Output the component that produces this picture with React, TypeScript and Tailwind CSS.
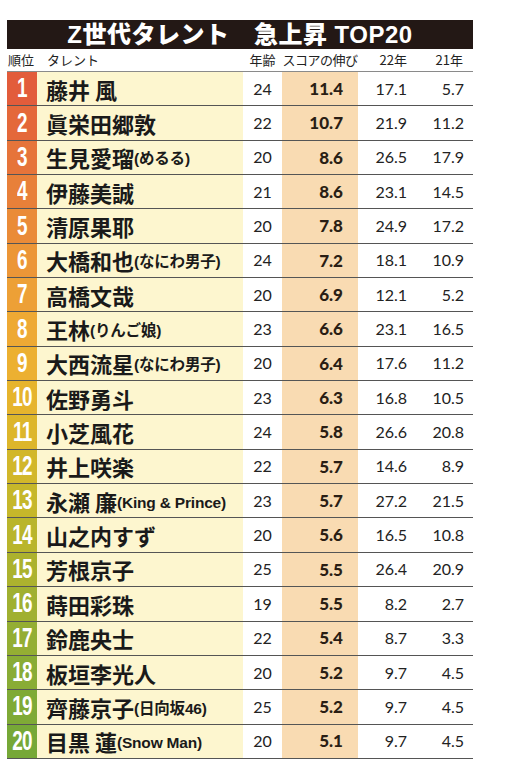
import React from "react";

const rows = [
  { rank: 1, name: "藤井 風", sub: "", age: 24, score: "11.4", y22: "17.1", y21: "5.7", color: "bg-[#e25c3b]" },
  { rank: 2, name: "眞栄田郷敦", sub: "", age: 22, score: "10.7", y22: "21.9", y21: "11.2", color: "bg-[#e4683a]" },
  { rank: 3, name: "生見愛瑠", sub: "(めるる)", age: 20, score: "8.6", y22: "26.5", y21: "17.9", color: "bg-[#e6743a]" },
  { rank: 4, name: "伊藤美誠", sub: "", age: 21, score: "8.6", y22: "23.1", y21: "14.5", color: "bg-[#e88039]" },
  { rank: 5, name: "清原果耶", sub: "", age: 20, score: "7.8", y22: "24.9", y21: "17.2", color: "bg-[#ea8b38]" },
  { rank: 6, name: "大橋和也", sub: "(なにわ男子)", age: 24, score: "7.2", y22: "18.1", y21: "10.9", color: "bg-[#ec9637]" },
  { rank: 7, name: "高橋文哉", sub: "", age: 20, score: "6.9", y22: "12.1", y21: "5.2", color: "bg-[#eda036]" },
  { rank: 8, name: "王林", sub: "(りんご娘)", age: 23, score: "6.6", y22: "23.1", y21: "16.5", color: "bg-[#eea934]" },
  { rank: 9, name: "大西流星", sub: "(なにわ男子)", age: 20, score: "6.4", y22: "17.6", y21: "11.2", color: "bg-[#ecb031]" },
  { rank: 10, name: "佐野勇斗", sub: "", age: 23, score: "6.3", y22: "16.8", y21: "10.5", color: "bg-[#e6b42d]" },
  { rank: 11, name: "小芝風花", sub: "", age: 24, score: "5.8", y22: "26.6", y21: "20.8", color: "bg-[#ddb62b]" },
  { rank: 12, name: "井上咲楽", sub: "", age: 22, score: "5.7", y22: "14.6", y21: "8.9", color: "bg-[#d2b72a]" },
  { rank: 13, name: "永瀬 廉", sub: "(King & Prince)", age: 23, score: "5.7", y22: "27.2", y21: "21.5", color: "bg-[#c6b72a]" },
  { rank: 14, name: "山之内すず", sub: "", age: 20, score: "5.6", y22: "16.5", y21: "10.8", color: "bg-[#b9b52c]" },
  { rank: 15, name: "芳根京子", sub: "", age: 25, score: "5.5", y22: "26.4", y21: "20.9", color: "bg-[#acb22e]" },
  { rank: 16, name: "蒔田彩珠", sub: "", age: 19, score: "5.5", y22: "8.2", y21: "2.7", color: "bg-[#a0b031]" },
  { rank: 17, name: "鈴鹿央士", sub: "", age: 22, score: "5.4", y22: "8.7", y21: "3.3", color: "bg-[#94ae33]" },
  { rank: 18, name: "板垣李光人", sub: "", age: 20, score: "5.2", y22: "9.7", y21: "4.5", color: "bg-[#89ac35]" },
  { rank: 19, name: "齊藤京子", sub: "(日向坂46)", age: 25, score: "5.2", y22: "9.7", y21: "4.5", color: "bg-[#7faa36]" },
  { rank: 20, name: "目黒 蓮", sub: "(Snow Man)", age: 20, score: "5.1", y22: "9.7", y21: "4.5", color: "bg-[#76a837]" },
];

const jp = "font-['Noto_Sans_CJK_JP',sans-serif]";
const num = "font-['Lato','Noto_Sans',sans-serif]";

export default function App() {
  return (
    <div className="bg-white w-[514px] h-[772px] pt-[20px] pl-[7px]">
      <div className="w-[466px]">
        {/* Title */}
        <div className="h-[29px] bg-[#231815] flex items-center justify-center text-white text-[24px] font-black tracking-[0.5px] leading-none font-['Liberation_Sans','Noto_Sans_CJK_JP',sans-serif]">
          Z世代タレント　急上昇 TOP20
        </div>

        {/* Header */}
        <div className={`flex h-[23px] items-center border-b border-[#8a8a8a] text-[13px] text-[#222] ${jp}`}>
          <div className="w-[30px] pl-[1px]">順位</div>
          <div className="w-[206px] pl-[10px]">タレント</div>
          <div className="w-[39px] text-center">年齢</div>
          <div className="w-[76px] text-center tracking-[-0.5px]">スコアの伸び</div>
          <div className="w-[60px] text-right pr-[11px]">22年</div>
          <div className="w-[55px] text-right pr-[10px]">21年</div>
        </div>

        {/* Rows */}
        {rows.map((r) => (
          <div key={r.rank} className="flex h-[34.35px] border-b border-[#555]">
            <div className={`w-[30px] ${r.color} flex items-center justify-center text-white`}>
              <span className="inline-block scale-x-[0.7] text-[27px] font-bold leading-none tracking-[-1px] font-['Liberation_Sans',sans-serif]">
                {r.rank}
              </span>
            </div>
            <div className="w-[206px] bg-[#fdf6cf] flex items-center pl-[9px] text-[#1a1a1a]">
              <span className={`text-[22px] leading-none font-bold ${jp}`}>{r.name}</span>
              {r.sub && (
                <span className="mt-[3px] text-[15.5px] leading-none font-bold tracking-[-0.2px] font-['Liberation_Sans','Noto_Sans_CJK_JP',sans-serif]">
                  {r.sub}
                </span>
              )}
            </div>
            <div className={`w-[39px] flex items-center justify-center text-[16px] text-[#222] ${num}`}>{r.age}</div>
            <div className={`w-[76px] bg-[#f9dbb2] flex items-center justify-end pr-[15px] text-[17px] font-black text-[#2a1e14] ${num}`}>
              {r.score}
            </div>
            <div className={`w-[60px] flex items-center justify-end pr-[11px] text-[16px] text-[#222] ${num}`}>{r.y22}</div>
            <div className={`w-[55px] flex items-center justify-end pr-[9px] text-[16px] text-[#222] ${num}`}>{r.y21}</div>
          </div>
        ))}
      </div>
    </div>
  );
}
